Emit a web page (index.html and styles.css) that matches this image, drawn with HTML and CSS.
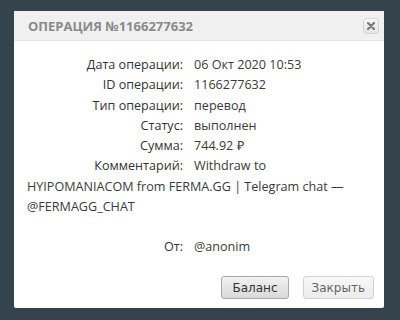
FILE: index.html
```html
<!DOCTYPE html>
<html lang="ru">
<head>
    <meta charset="UTF-8">
    <meta name="viewport" content="width=device-width, initial-scale=1.0">
    <title>Операция №1166277632</title>
    <link rel="stylesheet" href="styles.css">
</head>
<body>
    <div class="dialog">
        <div class="dialog-header">
            <span class="dialog-title">Операция №1166277632</span>
            <button class="close-btn" title="Закрыть">
                <svg width="8" height="8" viewBox="0 0 8 8"><path d="M1 1L7 7M7 1L1 7" stroke="#7a7a7a" stroke-width="2.2" stroke-linecap="round"/></svg>
            </button>
        </div>
        <div class="dialog-body">
            <div class="row"><span class="label">Дата операции:</span>06 Окт 2020 10:53</div>
            <div class="row"><span class="label">ID операции:</span>1166277632</div>
            <div class="row"><span class="label">Тип операции:</span>перевод</div>
            <div class="row"><span class="label">Статус:</span>выполнен</div>
            <div class="row"><span class="label">Сумма:</span>744.92 ₽</div>
            <div class="row"><span class="label">Комментарий:</span>Withdraw to HYIPOMANIACOM from FERMA.GG | Telegram chat — @FERMAGG_CHAT</div>
            <div class="row from"><span class="label">От:</span>@anonim</div>
        </div>
        <div class="dialog-buttons">
            <button class="btn btn-active">Баланс</button>
            <button class="btn">Закрыть</button>
        </div>
    </div>
</body>
</html>
```

FILE: styles.css
```css
body {
    margin: 0;
    padding: 11px 0 0 14px;
    background-color: #35434d;
    height: 320px;
    box-sizing: border-box;
    overflow: hidden;
}
.dialog {
    width: 370px;
    height: 297px;
    background-color: white;
    border-radius: 2px;
    display: flex;
    flex-direction: column;
}
.dialog-header {
    height: 30px;
    background-color: #f0f0f0;
    border-bottom: 1px solid #e4e4e4;
    display: flex;
    align-items: center;
    justify-content: space-between;
    padding: 0 5px 0 14px;
    box-sizing: border-box;
}
.dialog-title {
    font-family: 'Open Sans', sans-serif;
    font-weight: bold;
    font-size: 13px;
    letter-spacing: 0;
    text-transform: uppercase;
    color: #8a8a8a;
}
.close-btn {
    width: 16px;
    height: 16px;
    padding: 0;
    border: 1px solid #d6d6d6;
    border-radius: 3px;
    background: linear-gradient(#f6f6f6, #e4e4e4);
    display: flex;
    align-items: center;
    justify-content: center;
}
.dialog-body {
    padding: 14px 10px 0 13px;
    font-family: 'Open Sans', sans-serif;
    font-size: 12.6px;
    line-height: 20.3px;
    color: #3a3a3a;
    flex: 1;
}
.label {
    display: inline-block;
    width: 156px;
    text-align: right;
    margin-right: 11px;
    color: #333;
}
.from {
    margin-top: 20px;
}
.dialog-buttons {
    display: flex;
    justify-content: flex-end;
    gap: 14px;
    padding: 0 10px 9px 0;
}
.btn {
    font-family: 'DejaVu Sans', Verdana, sans-serif;
    font-size: 12px;
    height: 23px;
    padding: 0 8px;
    border: 1px solid #d3d3d3;
    border-radius: 3px;
    background: linear-gradient(#f8f8f8, #ececec);
    color: #666;
}
.btn-active {
    padding: 0 10px;
    border-color: #a9a9a9;
    background: linear-gradient(#f2f2f2, #d9d9d9);
    color: #333;
}
```
